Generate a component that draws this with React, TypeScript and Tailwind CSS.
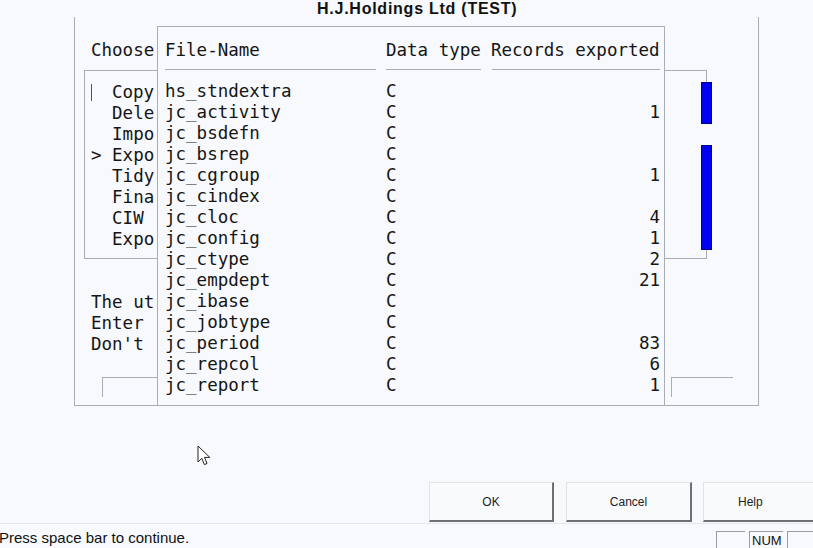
import React from 'react'

const rows: [string, string, string][] = [
  ['hs_stndextra', 'C', ''],
  ['jc_activity', 'C', '1'],
  ['jc_bsdefn', 'C', ''],
  ['jc_bsrep', 'C', ''],
  ['jc_cgroup', 'C', '1'],
  ['jc_cindex', 'C', ''],
  ['jc_cloc', 'C', '4'],
  ['jc_config', 'C', '1'],
  ['jc_ctype', 'C', '2'],
  ['jc_empdept', 'C', '21'],
  ['jc_ibase', 'C', ''],
  ['jc_jobtype', 'C', ''],
  ['jc_period', 'C', '83'],
  ['jc_repcol', 'C', '6'],
  ['jc_report', 'C', '1'],
]

const menu = ['  Copy', '  Dele', '  Impo', '> Expo', '  Tidy', '  Fina', '  CIW', '  Expo']

function Cursor() {
  return (
    <svg className="absolute left-[197px] top-[445px]" width="15" height="22" viewBox="0 0 15 22">
      <path
        d="M1 1 L1 17 L4.8 13.3 L7.4 19.6 L10 18.5 L7.5 12.4 L12.8 12.4 Z"
        fill="#ffffff"
        stroke="#222"
        strokeWidth="1"
        strokeLinejoin="miter"
      />
    </svg>
  )
}

export default function App() {
  return (
    <div className="relative w-[813px] h-[548px] overflow-hidden bg-[#f7f9fc] flex flex-col">
      {/* Title */}
      <div className="h-[17px] pl-[317px] font-['Liberation_Sans',Arial,sans-serif] font-bold text-[16px] tracking-[0.75px] leading-[18px] text-[#111] whitespace-nowrap">
        H.J.Holdings Ltd (TEST)
      </div>

      {/* Dialog body */}
      <div className="relative h-[389px] font-['DejaVu_Sans_Mono',monospace] text-[17.5px] leading-[21px] text-[#151515]">
        <div className="ml-[74px] w-[685px] h-[389px] border-l border-r border-b border-[#a9adb6] flex flex-col">
          <div className="pt-[22.5px] pl-[16px] whitespace-pre">Choose</div>

          {/* Menu box */}
          <div className="mt-[9px] ml-[9px] w-[623px] h-[189px] border-l border-t border-b border-[#a9adb6] flex">
            <div className="flex-1 pt-[11px] pl-[6px] whitespace-pre">
              {menu.map((m, i) => (
                <div key={i} className="h-[21px] flex items-center">
                  {i === 0 ? (
                    <>
                      <span className="inline-block w-px h-[17px] bg-[#4a4a9a]" />
                      <span className="ml-[20px]">{m.trim()}</span>
                    </>
                  ) : (
                    m
                  )}
                </div>
              ))}
            </div>
            <div className="w-[11px] mr-[-5px] flex flex-col">
              <div className="h-[11px] ml-[5px] w-px bg-[#a9adb6]" />
              <div className="h-[42px] bg-[#0000f0] border border-[#00008a]" />
              <div className="h-[21px]" />
              <div className="h-[105px] bg-[#0000f0] border border-[#00008a]" />
              <div className="h-[8px] ml-[5px] w-px bg-[#a9adb6]" />
            </div>
          </div>

          <div className="mt-[33px] pl-[16px] whitespace-pre">
            <div>The ut</div>
            <div>Enter</div>
            <div>Don't</div>
          </div>

          {/* Input fields */}
          <div className="mt-[22px] flex">
            <div className="ml-[27px] w-[300px] h-[20px] border-l border-t border-[#a9adb6]" />
            <div className="ml-[269px] w-[62px] h-[20px] border-l border-t border-[#a9adb6]" />
          </div>
        </div>

        {/* Export list popup */}
        <div className="absolute left-[157px] top-[9px] w-[508px] h-[380px] border border-[#a9adb6] bg-[#f7f9fc] pl-[7px] pt-[12.5px] whitespace-pre">
          <div className="grid grid-cols-[221px_105px_169px] h-[21px]">
            <div>File-Name</div>
            <div>Data type</div>
            <div>Records exported</div>
          </div>
          <div className="mt-[8px] flex h-px">
            <div className="w-[211px] bg-[#a9adb6]" />
            <div className="ml-[10px] w-[95px] bg-[#a9adb6]" />
            <div className="ml-[11px] w-[168px] bg-[#a9adb6]" />
          </div>
          <div className="mt-[11px]">
            {rows.map(([name, type, count]) => (
              <div key={name} className="grid grid-cols-[221px_105px_169px] h-[21px]">
                <div>{name}</div>
                <div>{type}</div>
                <div className="text-right">{count}</div>
              </div>
            ))}
          </div>
        </div>
      </div>

      {/* Buttons */}
      <div className="mt-[76px] h-[40px] flex pl-[429px] font-['Liberation_Sans',Arial,sans-serif] text-[12px] text-[#222]">
        <button className="w-[125px] h-[40px] shrink-0 pt-[1px] bg-[#f9fafc] border-t border-l border-t-[#e2e3e6] border-l-[#e2e3e6] border-r-2 border-b-2 border-r-[#6d6f73] border-b-[#6d6f73]">
          OK
        </button>
        <button className="ml-[12px] w-[126px] h-[40px] shrink-0 pt-[1px] bg-[#f9fafc] border-t border-l border-t-[#e2e3e6] border-l-[#e2e3e6] border-r-2 border-b-2 border-r-[#6d6f73] border-b-[#6d6f73]">
          Cancel
        </button>
        <button className="ml-[11px] w-[130px] h-[40px] shrink-0 pt-[1px] bg-[#f9fafc] border-t border-l border-t-[#e2e3e6] border-l-[#e2e3e6] border-r-2 border-b-2 border-r-[#6d6f73] border-b-[#6d6f73] text-left pl-[34px]">
          Help
        </button>
      </div>

      {/* Status bar */}
      <div className="mt-px h-[25px] border-t border-[#e6e8ee] flex flex-col font-['Liberation_Sans',Arial,sans-serif] text-[15px] text-[#111]">
        <div className="flex-1 flex items-center">
          <span className="ml-[-1px] pt-[3px]">Press space bar to continue.</span>
          <div className="ml-auto mr-[-4px] flex items-end self-stretch pt-[3px] text-[13px]">
            <div className="w-[29px] h-[19px] border-t border-l border-[#9a9ca2]" />
            <div className="ml-[4px] w-[34px] h-[19px] border-t border-l border-[#9a9ca2] leading-[18px] pl-[2px]">NUM</div>
            <div className="ml-[4px] w-[30px] h-[19px] border-t border-l border-[#9a9ca2]" />
          </div>
        </div>
        <div className="h-[2px] bg-[#cfdff2]" />
      </div>

      <Cursor />
    </div>
  )
}
